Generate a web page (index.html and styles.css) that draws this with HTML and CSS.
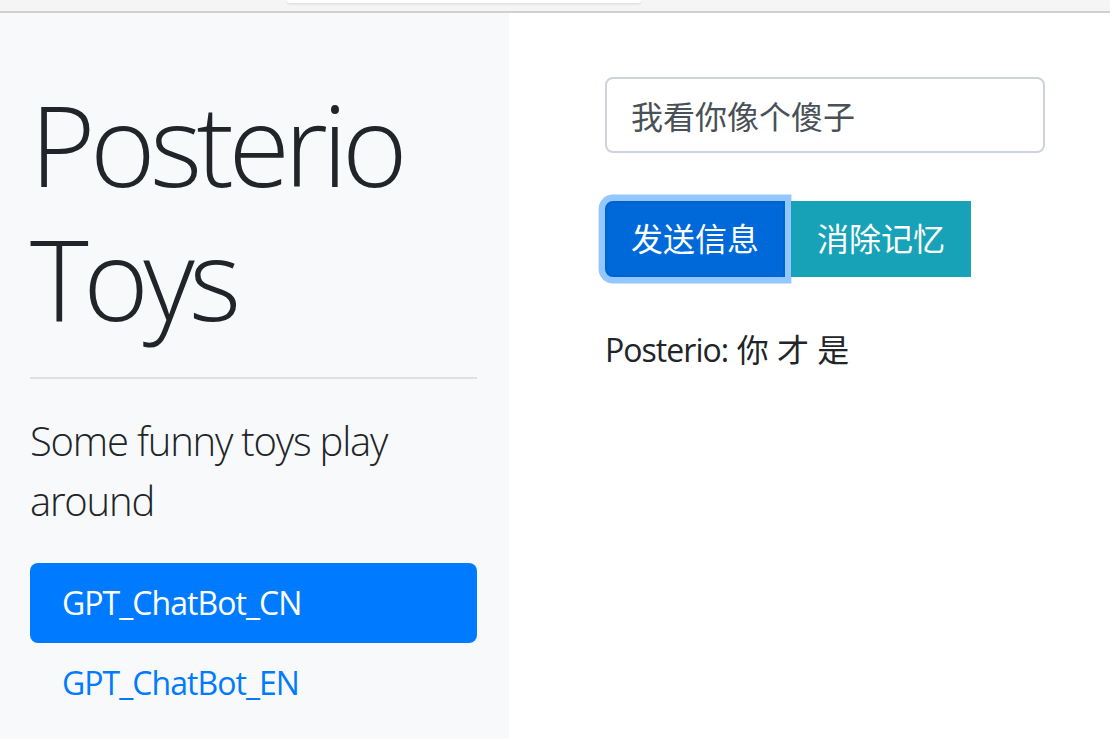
FILE: index.html
```html
<!DOCTYPE html>
<html lang="zh">
<head>
    <meta charset="UTF-8">
    <meta name="viewport" content="width=device-width, initial-scale=1.0">
    <title>Posterio Toys</title>
    <link rel="stylesheet" href="styles.css">
</head>
<body>

    <div class="chrome">
        <div class="chrome-tab"></div>
    </div>

    <div class="page">
        <aside class="sidebar">
            <h1 class="title">Posterio Toys</h1>
            <hr class="divider">
            <p class="lead">Some funny toys play around</p>
            <nav class="pills">
                <a class="pill active" href="#">GPT_ChatBot_CN</a>
                <a class="pill" href="#">GPT_ChatBot_EN</a>
            </nav>
        </aside>

        <main class="content">
            <input class="text-input" type="text" value="我看你像个傻子">
            <div class="btn-row">
                <button class="btn btn-primary focused">发送信息</button>
                <button class="btn btn-info">消除记忆</button>
            </div>
            <p class="reply"><span class="reply-name">Posterio:</span> 你 才 是</p>
        </main>
    </div>

</body>
</html>
```

FILE: styles.css
```css
body {
    margin: 0;
    font-family: 'Open Sans', 'Noto Sans CJK SC', sans-serif;
    color: #212529;
    background-color: #fff;
    height: 739px;
    overflow: hidden;
    display: flex;
    flex-direction: column;
}

.chrome {
    height: 11px;
    background-color: #f5f5f5;
    border-bottom: 2px solid #d0d0d0;
    display: flex;
}

.chrome-tab {
    margin-left: 287px;
    width: 354px;
    height: 3px;
    background-color: #fff;
    border-radius: 0 0 6px 6px;
    box-shadow: 0 1px 3px rgba(0, 0, 0, 0.12);
}

.page {
    flex: 1;
    display: flex;
}

.sidebar {
    width: 509px;
    box-sizing: border-box;
    background-color: #f8f9fa;
    padding: 64px 32px 0 30px;
}

.title {
    font-size: 112px;
    font-weight: 300;
    line-height: 1.2;
    letter-spacing: -0.05em;
    margin: 0 0 31px;
}

.divider {
    border: 0;
    border-top: 2px solid #dfe0e1;
    margin: 0 0 32px;
}

.lead {
    font-size: 40px;
    font-weight: 300;
    line-height: 1.5;
    letter-spacing: -0.03em;
    margin: 0 0 32px;
}

.pills {
    display: flex;
    flex-direction: column;
}

.pill {
    display: block;
    padding: 16px 32px;
    font-size: 32px;
    line-height: 1.5;
    letter-spacing: -0.03em;
    color: #007bff;
    text-decoration: none;
    border-radius: 8px;
}

.pill.active {
    background-color: #007bff;
    color: #fff;
}

.content {
    flex: 1;
    padding: 64px 0 0 96px;
}

.text-input {
    display: block;
    width: 440px;
    height: 76px;
    box-sizing: border-box;
    padding: 12px 24px;
    font-family: inherit;
    font-size: 32px;
    line-height: 1.5;
    color: #495057;
    border: 2px solid #ced4da;
    border-radius: 8px;
    margin: 0 0 48px;
}

.btn-row {
    display: flex;
    gap: 6px;
}

.btn {
    font-family: inherit;
    font-size: 32px;
    line-height: 1.5;
    padding: 12px 24px;
    color: #fff;
    border: 2px solid transparent;
    border-radius: 0;
    cursor: pointer;
}

.btn-primary {
    background-color: #007bff;
    border-color: #007bff;
    border-radius: 8px 0 0 8px;
}

.btn-primary.focused {
    background-color: #0069d9;
    border-color: #0062cc;
    box-shadow: 0 0 0 6.4px rgba(38, 143, 255, 0.5);
    position: relative;
}

.btn-info {
    background-color: #17a2b8;
    border-color: #17a2b8;
}

.reply {
    font-size: 32px;
    line-height: 1.5;
    margin: 49px 0 0;
}

.reply-name {
    letter-spacing: -0.03em;
}
```
